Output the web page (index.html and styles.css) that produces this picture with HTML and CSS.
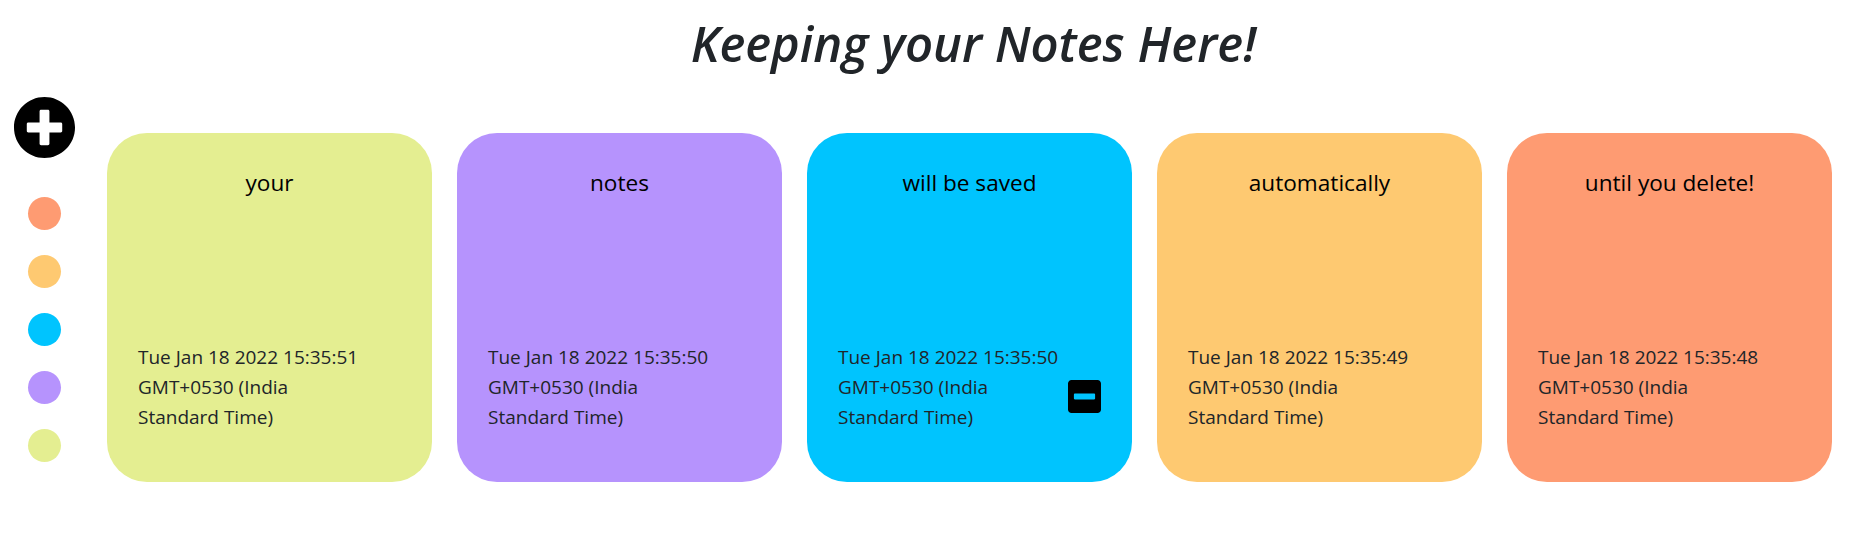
FILE: index.html
```html
<!DOCTYPE html>
<html lang="en">
<head>
<meta charset="utf-8">
<title>Notes</title>
<link rel="stylesheet" href="styles.css">
</head>
<body>
<div class="app">
  <aside class="sidebar">
    <button class="add-btn" aria-label="Add note">
      <svg class="add-icon" viewBox="0 0 512 512" width="63" height="63"><path d="M256 8C119 8 8 119 8 256s111 248 248 248 248-111 248-248S393 8 256 8zm144 276c0 6.6-5.4 12-12 12h-92v92c0 6.6-5.4 12-12 12h-56c-6.6 0-12-5.4-12-12v-92h-92c-6.6 0-12-5.4-12-12v-56c0-6.6 5.4-12 12-12h92v-92c0-6.6 5.4-12 12-12h56c6.6 0 12 5.4 12 12v92h92c6.6 0 12 5.4 12 12v56z"/></svg>
    </button>
    <ul class="color-list">
      <li class="dot c-orange"></li>
      <li class="dot c-yellow"></li>
      <li class="dot c-cyan"></li>
      <li class="dot c-purple"></li>
      <li class="dot c-lime"></li>
    </ul>
  </aside>
  <main class="main">
    <h1 class="heading">Keeping your Notes Here!</h1>
    <div class="notes">
      <div class="note c-lime">
        <div class="note-text">your</div>
        <div class="note-footer">
          <p class="note-date">Tue Jan 18 2022 15:35:51 GMT+0530 (India Standard Time)</p>
        </div>
      </div>
      <div class="note c-purple">
        <div class="note-text">notes</div>
        <div class="note-footer">
          <p class="note-date">Tue Jan 18 2022 15:35:50 GMT+0530 (India Standard Time)</p>
        </div>
      </div>
      <div class="note c-cyan">
        <div class="note-text">will be saved</div>
        <div class="note-footer">
          <p class="note-date">Tue Jan 18 2022 15:35:50 GMT+0530 (India Standard Time)</p>
          <svg class="del-icon" viewBox="0 32 448 448" width="33" height="33"><path d="M400 32H48C21.5 32 0 53.5 0 80v352c0 26.5 21.5 48 48 48h352c26.5 0 48-21.5 48-48V80c0-26.5-21.5-48-48-48zM92 296c-6.6 0-12-5.4-12-12v-56c0-6.6 5.4-12 12-12h264c6.6 0 12 5.4 12 12v56c0 6.6-5.4 12-12 12H92z"/></svg>
        </div>
      </div>
      <div class="note c-yellow">
        <div class="note-text">automatically</div>
        <div class="note-footer">
          <p class="note-date">Tue Jan 18 2022 15:35:49 GMT+0530 (India Standard Time)</p>
        </div>
      </div>
      <div class="note c-orange">
        <div class="note-text">until you delete!</div>
        <div class="note-footer">
          <p class="note-date">Tue Jan 18 2022 15:35:48 GMT+0530 (India Standard Time)</p>
        </div>
      </div>
    </div>
  </main>
</div>
</body>
</html>
```

FILE: styles.css
```css
* { box-sizing: border-box; }

body {
  margin: 0;
  background: #ffffff;
  font-family: "Open Sans", "Noto Sans", sans-serif;
  color: #212529;
}

.app {
  display: flex;
  align-items: flex-start;
}

.sidebar {
  width: 89px;
  flex: 0 0 89px;
  display: flex;
  flex-direction: column;
  align-items: center;
  padding-top: 96px;
}

.add-btn {
  border: 0;
  padding: 0;
  background: none;
  display: block;
  line-height: 0;
  cursor: pointer;
}

.add-icon { fill: #000; display: block; }

.color-list {
  list-style: none;
  margin: 38px 0 0;
  padding: 0;
  display: flex;
  flex-direction: column;
  align-items: center;
  gap: 25px;
}

.dot {
  width: 33px;
  height: 33px;
  border-radius: 50%;
}

.c-orange { background: #fe9b72; }
.c-yellow { background: #fec971; }
.c-cyan { background: #00c4fe; }
.c-purple { background: #b693fd; }
.c-lime { background: #e4ee91; }

.main {
  flex: 1;
  padding: 0 18px;
}

.heading {
  margin: 14px 0 0;
  padding-left: 8px;
  font-size: 49px;
  line-height: 58px;
  font-weight: 600;
  font-style: italic;
  text-align: center;
  color: #212529;
}

.notes {
  margin-top: 61px;
  display: flex;
  gap: 25px;
}

.note {
  width: 325px;
  height: 349px;
  flex: 0 0 325px;
  border-radius: 40px;
  padding: 35px 31px 50px;
  display: flex;
  flex-direction: column;
  justify-content: space-between;
}

.note-text {
  font-size: 22.6px;
  line-height: 29px;
  text-align: center;
  color: #000;
}

.note-footer {
  display: flex;
  justify-content: space-between;
  align-items: center;
}

.note-date {
  margin: 0;
  width: 232px;
  font-size: 19px;
  line-height: 30px;
  color: #212529;
}

.del-icon {
  fill: #000;
  margin-top: 18px;
  flex: 0 0 auto;
}
```
